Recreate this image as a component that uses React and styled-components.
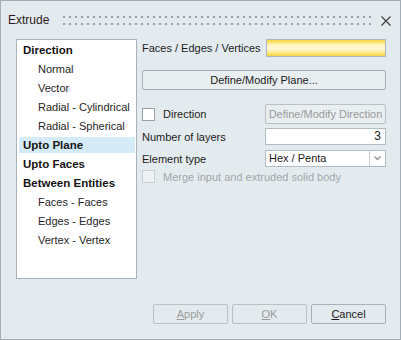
import React from "react";
import styled, { createGlobalStyle } from "styled-components";

const GlobalStyle = createGlobalStyle`
    html, body {
        margin: 0;
        padding: 0;
        background: #e4ebef;
    }
    body {
        font-family: "Liberation Sans", Arial, sans-serif;
        font-size: 11px;
        color: #1c1c1c;
    }
`;

const Window = styled.div`
    width: 401px;
    height: 340px;
    box-sizing: border-box;
    border: 1px solid #a5adb5;
    background: #e4ebef;
    display: flex;
    flex-direction: column;
    white-space: nowrap;
`;

const TitleBar = styled.div`
    height: 38px;
    display: flex;
    align-items: center;
    padding: 0 9px 0 7px;
`;

const Title = styled.span`
    color: #2a1a1a;
    font-size: 12px;
`;

const Grip = styled.div`
    flex: 1;
    height: 9px;
    margin: 1px 8px 0 14px;
    background:
        linear-gradient(to right, #9aa0a6 2px, transparent 2px) 0 0 / 6px 2px repeat-x,
        linear-gradient(to right, #9aa0a6 2px, transparent 2px) 0 7px / 6px 2px repeat-x;
`;

const CloseIcon = styled.svg`
    width: 10px;
    height: 10px;
    margin-top: 1px;
`;

const Body = styled.div`
    flex: 1;
    display: flex;
    flex-direction: column;
    padding: 0 14px 15px 15px;
`;

const Main = styled.div`
    display: flex;
    gap: 5px;
`;

const TypeList = styled.ul`
    list-style: none;
    margin: 0;
    padding: 0;
    width: 121px;
    height: 240px;
    box-sizing: border-box;
    background: #fff;
    border: 1px solid #a9b1b9;
`;

const TypeItem = styled.li`
    height: 19px;
    display: flex;
    align-items: center;
    padding-left: ${(p) => (p.$sub ? "21px" : "6px")};
    font-weight: ${(p) => (p.$sub ? "normal" : "bold")};
    font-size: ${(p) => (p.$sub ? "11px" : "11.5px")};
    color: ${(p) => (p.$sub ? "#262626" : "#141414")};
`;

const Highlight = styled.span`
    display: flex;
    align-items: center;
    height: 16px;
    margin: 0 1px 0 -4px;
    padding-left: 4px;
    flex: 1;
    background: #d5ecf8;
`;

const Panel = styled.div`
    flex: 1;
    display: flex;
    flex-direction: column;
`;

const FieldRow = styled.div`
    display: flex;
    align-items: center;
    justify-content: space-between;
    height: ${(p) => p.$h || 17}px;
    margin-top: ${(p) => p.$mt || 0}px;
`;

const SelectionBox = styled.div`
    width: 120px;
    height: 18px;
    box-sizing: border-box;
    border: 1px solid #aeb6be;
    background: linear-gradient(to bottom, #f7d43a 0%, #fff3b8 30%, #fff8d8 55%, #fde98a 80%, #f6d23a 100%);
`;

const Button = styled.button`
    font-family: "Liberation Sans", Arial, sans-serif;
    font-size: 11px;
    height: ${(p) => p.$h || 20}px;
    width: ${(p) => (p.$w ? `${p.$w}px` : "100%")};
    box-sizing: border-box;
    border: 1px solid ${(p) => (p.disabled ? "#b9c0c6" : "#a9b0b7")};
    border-radius: 2px;
    background: ${(p) => (p.$light ? "#e9eef1" : "#e4ebef")};
    color: ${(p) => (p.disabled ? "#9a9a9a" : "#1a1a1a")};
    padding: 0;
    margin: 0;
    white-space: nowrap;
    u {
        text-decoration: underline;
    }
`;

const CheckLabel = styled.label`
    display: flex;
    align-items: center;
    gap: 8px;
    color: ${(p) => (p.$disabled ? "#a2a6aa" : "#1c1c1c")};
`;

const Box = styled.span`
    width: 13px;
    height: 13px;
    box-sizing: border-box;
    border: 1px solid ${(p) => (p.$disabled ? "#c9ced2" : "#9a9fa4")};
    background: ${(p) => (p.$disabled ? "#eef2f4" : "#fff")};
`;

const NumberBox = styled.div`
    width: 121px;
    height: 17px;
    box-sizing: border-box;
    border: 1px solid #b3bbc3;
    background: #fff;
    text-align: right;
    padding-right: 4px;
    line-height: 15px;
    font-size: 12px;
`;

const Select = styled.div`
    width: 121px;
    height: 17px;
    box-sizing: border-box;
    border: 1px solid #b3bbc3;
    background: #fff;
    display: flex;
`;

const SelectValue = styled.span`
    flex: 1;
    padding-left: 3px;
    line-height: 15px;
`;

const SelectArrow = styled.span`
    width: 15px;
    border-left: 1px solid #c9ced3;
    display: flex;
    align-items: center;
    justify-content: center;
`;

const Footer = styled.div`
    margin-top: auto;
    display: flex;
    justify-content: flex-end;
    gap: 4px;
`;

const items = [
    { label: "Direction" },
    { label: "Normal", sub: true },
    { label: "Vector", sub: true },
    { label: "Radial - Cylindrical", sub: true },
    { label: "Radial - Spherical", sub: true },
    { label: "Upto Plane", selected: true },
    { label: "Upto Faces" },
    { label: "Between Entities" },
    { label: "Faces - Faces", sub: true },
    { label: "Edges - Edges", sub: true },
    { label: "Vertex - Vertex", sub: true },
];

const App = () => {
    return (
        <Window>
            <GlobalStyle />
            <TitleBar>
                <Title>Extrude</Title>
                <Grip />
                <CloseIcon viewBox="0 0 10 10">
                    <path d="M0.5 0.5 L9.5 9.5 M9.5 0.5 L0.5 9.5" stroke="#3a3a3a" strokeWidth="1.1" fill="none" />
                </CloseIcon>
            </TitleBar>
            <Body>
                <Main>
                    <TypeList>
                        {items.map((item) => (
                            <TypeItem key={item.label} $sub={item.sub}>
                                {item.selected ? <Highlight>{item.label}</Highlight> : item.label}
                            </TypeItem>
                        ))}
                    </TypeList>
                    <Panel>
                        <FieldRow $h={18}>
                            <span>Faces / Edges / Vertices</span>
                            <SelectionBox />
                        </FieldRow>
                        <FieldRow $h={20} $mt={13}>
                            <Button $h={20} $light>Define/Modify Plane...</Button>
                        </FieldRow>
                        <FieldRow $h={20} $mt={14}>
                            <CheckLabel>
                                <Box />
                                Direction
                            </CheckLabel>
                            <Button $w={121} $light disabled>Define/Modify Direction</Button>
                        </FieldRow>
                        <FieldRow $mt={4}>
                            <span>Number of layers</span>
                            <NumberBox>3</NumberBox>
                        </FieldRow>
                        <FieldRow $mt={5}>
                            <span>Element type</span>
                            <Select>
                                <SelectValue>Hex / Penta</SelectValue>
                                <SelectArrow>
                                    <svg width="7" height="5" viewBox="0 0 7 5">
                                        <path d="M0.5 0.5 L3.5 3.5 L6.5 0.5" stroke="#8d9297" strokeWidth="1.3" fill="none" />
                                    </svg>
                                </SelectArrow>
                            </Select>
                        </FieldRow>
                        <FieldRow $h={13} $mt={3}>
                            <CheckLabel $disabled>
                                <Box $disabled />
                                Merge input and extruded solid body
                            </CheckLabel>
                        </FieldRow>
                    </Panel>
                </Main>
                <Footer>
                    <Button $w={75} disabled><u>A</u>pply</Button>
                    <Button $w={75} disabled><u>O</u>K</Button>
                    <Button $w={75}><u>C</u>ancel</Button>
                </Footer>
            </Body>
        </Window>
    );
};

export default App;
